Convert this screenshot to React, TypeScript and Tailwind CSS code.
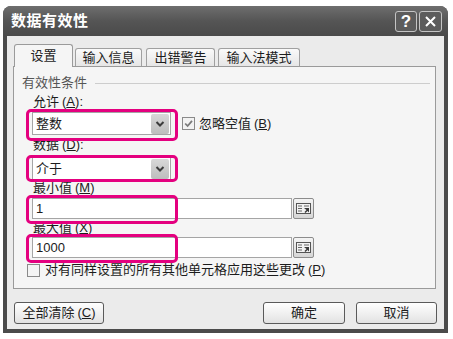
import React from "react";

const font = "font-['Liberation_Sans','Noto_Sans_CJK_SC',sans-serif]";

function Mn({ k }: { k: string }) {
    return (
        <span className="ml-[3px]">
            (<u>{k}</u>)
        </span>
    );
}

function Highlight({ top, height }: { top: number; height: number }) {
    const cls =
        top === -4 && height === 32
            ? "top-[-4px] h-[32px]"
            : top === -3
            ? "top-[-3px] h-[27px]"
            : "top-[-4px] h-[29px]";
    return <div className={`pointer-events-none absolute left-[-7px] w-[152px] rounded-[5px] border-[3px] border-[#e4007f] ${cls}`} />;
}

function Combo({ value, tall }: { value: string; tall?: boolean }) {
    return (
        <div className="relative ml-[18px] flex h-[23px] w-[139px] items-center border border-[#a5a5a5] bg-white pl-[3px]">
            <span className="flex-1 text-[13px] leading-[16px] text-[#1c1c1c]">{value}</span>
            <div className="mr-px flex h-[20px] w-[18px] items-center justify-center rounded-[2px] bg-gradient-to-b from-[#d8d8d8] to-[#bdbdbd]">
                <svg width="10" height="8" viewBox="0 0 10 8">
                    <path d="M1.5 2 L5 5.5 L8.5 2" fill="none" stroke="#3c3c3c" strokeWidth="2" />
                </svg>
            </div>
            <Highlight top={tall ? -4 : -3} height={tall ? 32 : 27} />
        </div>
    );
}

function RangeInput({ value }: { value: string }) {
    return (
        <div className="flex items-center">
            <div className="relative ml-[18px] flex h-[21px] w-[260px] items-center border border-[#a5a5a5] bg-white pl-[3px]">
                <span className="text-[13px] leading-[16px] text-[#1c1c1c]">{value}</span>
                <Highlight top={-4} height={29} />
            </div>
            <div className="ml-px flex h-[21px] w-[21px] items-center justify-center rounded-[2px] border border-[#8c8c8c] bg-gradient-to-b from-[#f4f4f4] to-[#d6d6d6]">
                <svg width="15" height="11" viewBox="0 0 15 11">
                    <rect x="0.5" y="0.5" width="14" height="10" fill="#f2f2f2" stroke="#555" />
                    <path d="M2 3h4M2 5.5h4M2 8h4M8 3h5" stroke="#666" strokeWidth="1" />
                    <path d="M8 5 L13 5 L13 9.5 L11.5 8 L9.5 10 L8.5 9 L10.5 7 Z" fill="#3a3a3a" />
                </svg>
            </div>
        </div>
    );
}

function Tab({ label, active }: { label: string; active?: boolean }) {
    return active ? (
        <div className="relative z-10 mb-[-1px] flex h-[23px] w-[59px] items-center justify-center rounded-t-[3px] border border-b-0 border-[#9a9a9a] bg-[#f5f5f5] text-[13px] text-[#1c1c1c]">
            {label}
        </div>
    ) : (
        <div className="flex h-[18px] items-center justify-center rounded-t-[3px] border border-b-0 border-[#a0a0a0] bg-gradient-to-b from-[#fafafa] to-[#e6e6e6] text-[13px] text-[#1c1c1c]">
            {label}
        </div>
    );
}

function Button({ children, w }: { children: React.ReactNode; w: string }) {
    return (
        <div className={`flex h-[22px] items-center justify-center rounded-[3px] border border-[#5a5a5a] bg-gradient-to-b from-[#ffffff] to-[#e2e2e2] text-[13px] text-[#1c1c1c] ${w}`}>
            {children}
        </div>
    );
}

export default function App() {
    return (
        <div className={`h-[339px] w-[453px] bg-white pl-[3px] pt-[6px] ${font}`}>
            <div className="flex h-[327px] w-[445px] flex-col rounded-t-[8px] bg-[#4b4b4b]">
                {/* title bar */}
                <div className="flex h-[30px] items-center rounded-t-[8px] bg-gradient-to-b from-[#6e6e6e] via-[#555555] to-[#4a4a4a] pl-[8px] pr-[6px]">
                    <span className="text-[15px] font-bold tracking-[0.5px] text-white">数据有效性</span>
                    <div className="ml-auto flex gap-[2px]">
                        <div className="flex h-[21px] w-[22px] items-center justify-center rounded-[3px] border border-[#c4c4c4] bg-[#5c5c5c] text-[17px] font-bold leading-none text-white">
                            ?
                        </div>
                        <div className="flex h-[21px] w-[23px] items-center justify-center rounded-[3px] border border-[#c4c4c4] bg-[#5c5c5c]">
                            <svg width="13" height="13" viewBox="0 0 13 13">
                                <path d="M2 2 L11 11 M11 2 L2 11" stroke="white" strokeWidth="2" />
                            </svg>
                        </div>
                    </div>
                </div>

                {/* dialog face */}
                <div className="mx-[4px] mb-[4px] flex flex-1 flex-col bg-[#ebebeb] pt-[8px]">
                    <div className="ml-[7px] flex items-end gap-[2px]">
                        <Tab label="设置" active />
                        <div className="w-[67px]">
                            <Tab label="输入信息" />
                        </div>
                        <div className="ml-[2px] w-[69px]">
                            <Tab label="出错警告" />
                        </div>
                        <div className="ml-px w-[82px]">
                            <Tab label="输入法模式" />
                        </div>
                    </div>

                    {/* tab panel */}
                    <div className="ml-[6px] flex h-[223px] w-[423px] flex-col border border-[#9a9a9a] bg-[#f5f5f5] text-[13px] leading-[16px] text-[#1c1c1c]">
                        <div className="mt-[8px] flex h-[16px] items-center pl-[8px]">
                            <span className="text-[#555]">有效性条件</span>
                            <div className="ml-[8px] mr-[5px] h-px flex-1 bg-[#cdcdcd]" />
                        </div>

                        <div className="mt-[3px] h-[16px] pl-[19px]">
                            允许<Mn k="A" />:
                        </div>
                        <div className="mt-[2px] flex items-center">
                            <Combo value="整数" tall />
                            <div className="ml-[11px] flex items-center">
                                <div className="flex h-[13px] w-[13px] items-center justify-center border border-[#8a8a8a] bg-[#f2f2f2]">
                                    <svg width="9" height="9" viewBox="0 0 9 9">
                                        <path d="M1.2 4.5 L3.6 7 L8 1.8" fill="none" stroke="#7a7a7a" strokeWidth="1.8" />
                                    </svg>
                                </div>
                                <span className="ml-[4px]">
                                    忽略空值<Mn k="B" />
                                </span>
                            </div>
                        </div>

                        <div className="mt-[2px] h-[16px] pl-[19px]">
                            数据<Mn k="D" />:
                        </div>
                        <div className="mt-[4px] flex">
                            <Combo value="介于" />
                        </div>

                        <div className="h-[16px] pl-[19px]">
                            最小值<Mn k="M" />
                        </div>
                        <div className="mt-[2px]">
                            <RangeInput value="1" />
                        </div>

                        <div className="mt-px h-[16px] pl-[19px]">
                            最大值<Mn k="X" />
                        </div>
                        <div className="mt-px">
                            <RangeInput value="1000" />
                        </div>

                        <div className="ml-[13px] mt-[4px] flex h-[16px] items-center">
                            <div className="h-[13px] w-[13px] border border-[#8a8a8a] bg-[#f4f4f4]" />
                            <span className="ml-[5px]">
                                对有同样设置的所有其他单元格应用这些更改<Mn k="P" />
                            </span>
                        </div>
                    </div>

                    {/* buttons */}
                    <div className="mt-[13px] flex px-[7px]">
                        <Button w="w-[90px]">
                            全部清除<Mn k="C" />
                        </Button>
                        <div className="ml-auto flex gap-[11px]">
                            <Button w="w-[82px]">确定</Button>
                            <Button w="w-[81px]">取消</Button>
                        </div>
                    </div>
                </div>
            </div>
        </div>
    );
}
